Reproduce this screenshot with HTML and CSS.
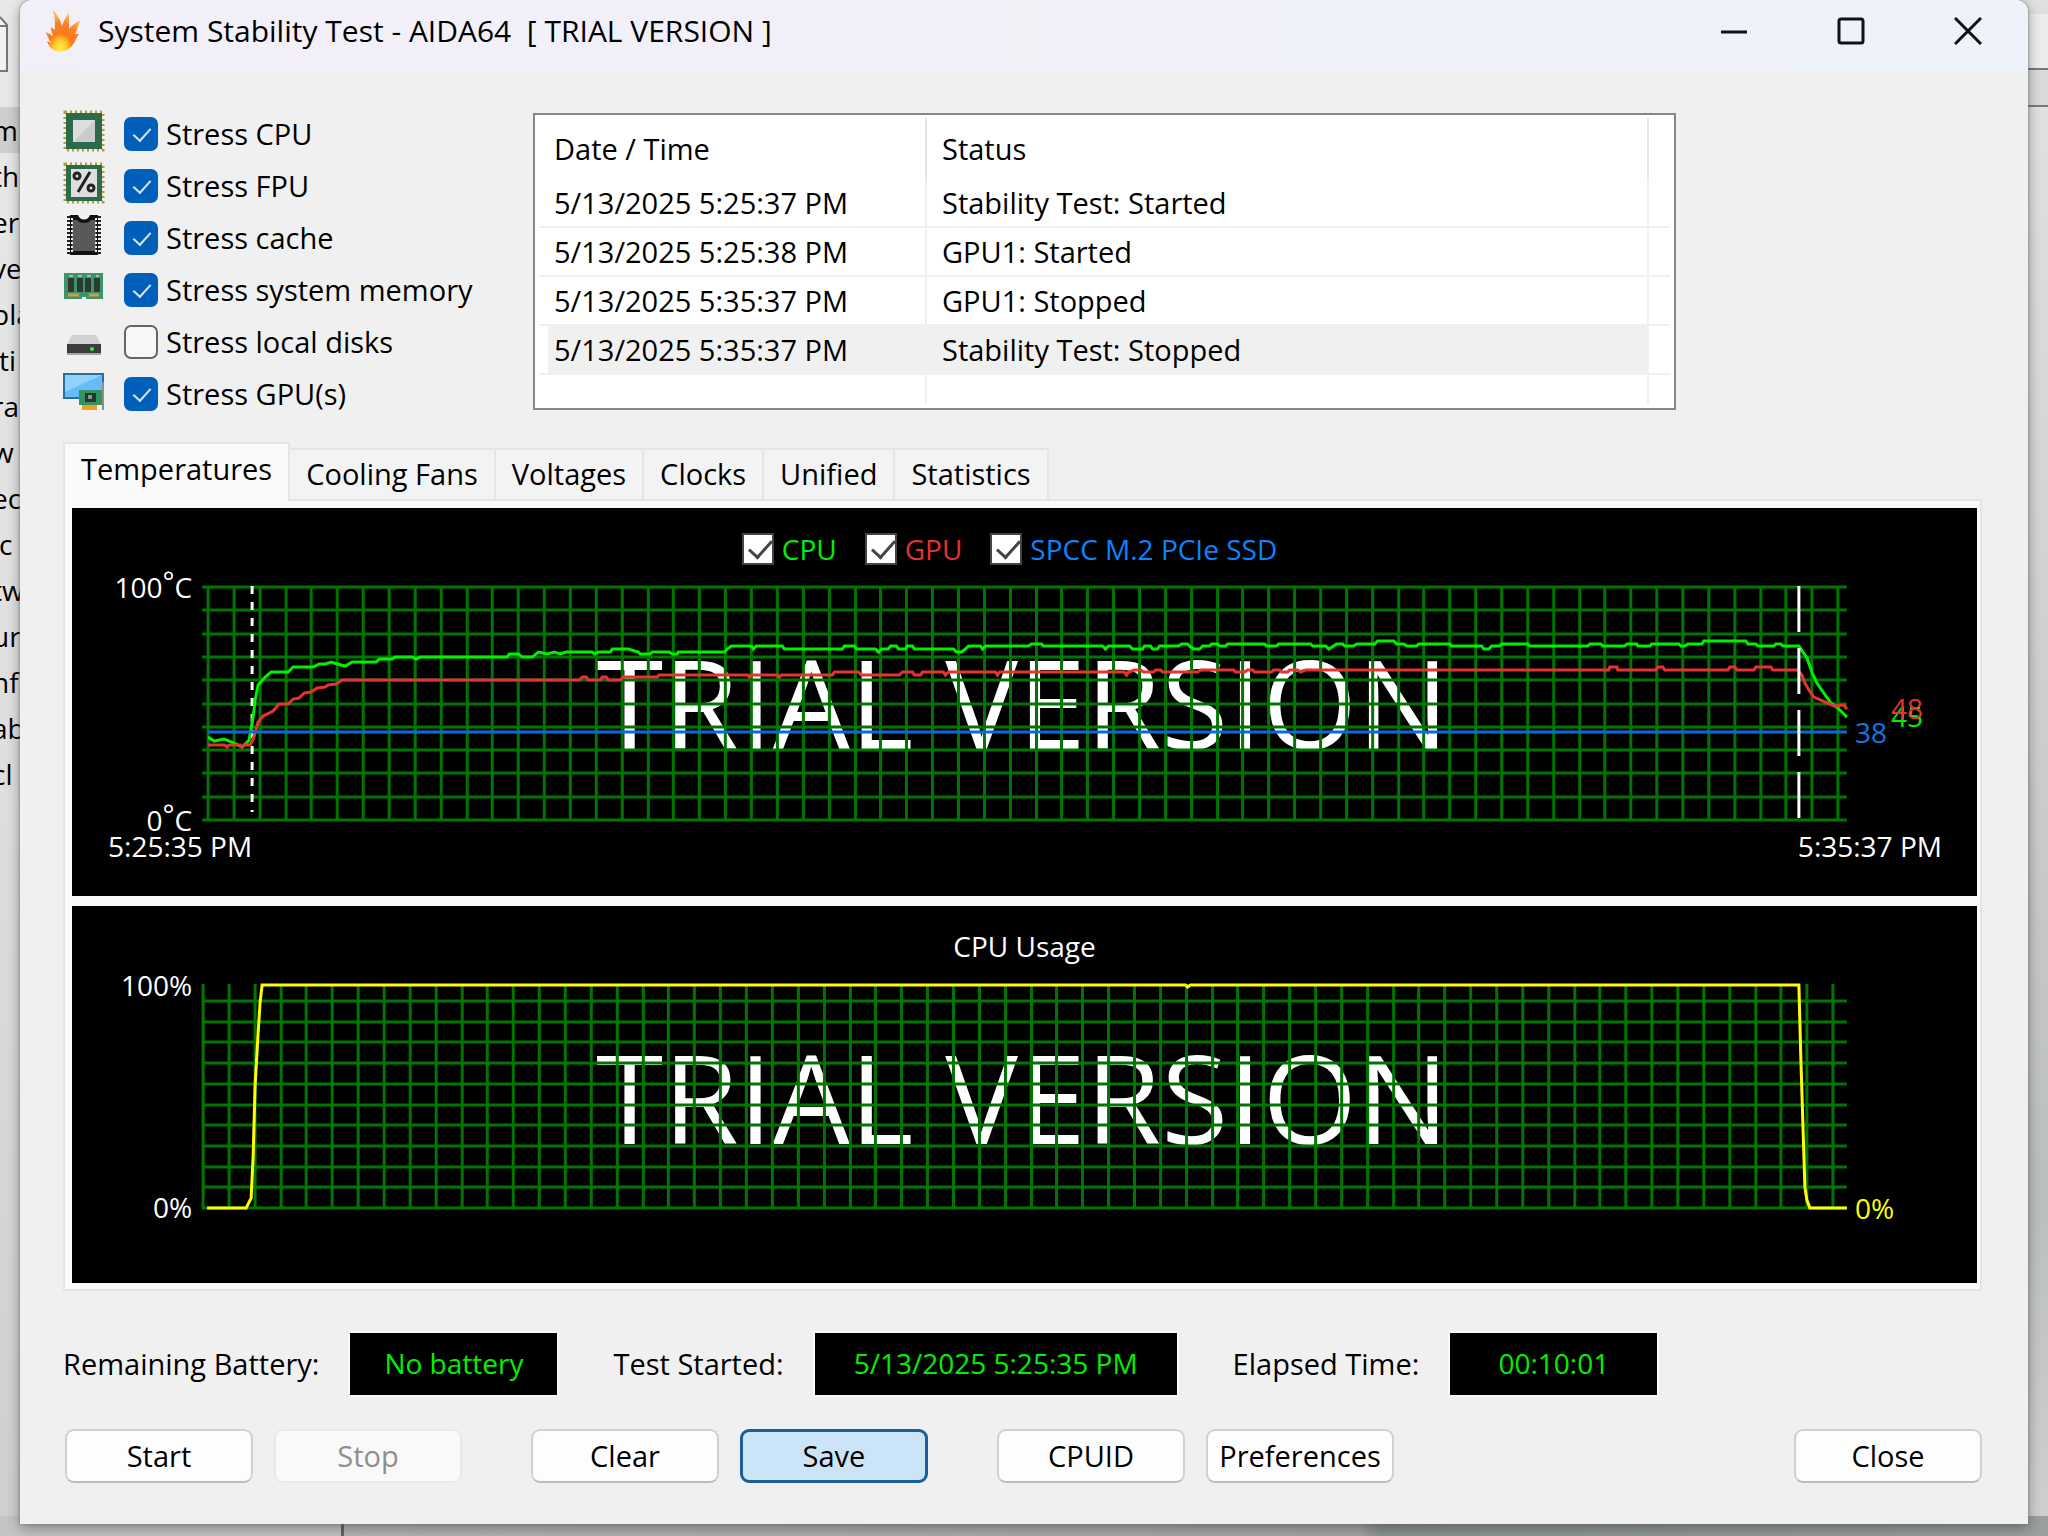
FILE: index.html
```html
<!DOCTYPE html>
<html lang="en">
<head>
    <meta charset="UTF-8">
    <meta name="viewport" content="width=device-width, initial-scale=1.0">
    <title>System Stability Test</title>
    <link rel="stylesheet" href="styles.css">
</head>
<body>

<!-- window behind -->
<div class="backdrop">
    <div class="back-left">
        <div class="back-toolbar">
            <svg width="8" height="56" viewBox="0 0 8 56"><path d="M0 1 L7 9 V55 H0" fill="#f2f2f2" stroke="#777" stroke-width="2"/><path d="M0 10 H7" stroke="#777" stroke-width="2"/></svg>
        </div>
        <ul class="back-menu">
            <li class="selected">mp</li>
            <li>th</li>
            <li>era</li>
            <li>ve</li>
            <li>pla</li>
            <li>lti</li>
            <li>ra</li>
            <li>w</li>
            <li>ect</li>
            <li>ic</li>
            <li>tw</li>
            <li>ur</li>
            <li>nfi</li>
            <li>ab</li>
            <li>cl</li>
        </ul>
    </div>
    <div class="back-right">
        <div class="back-strip"></div>
        <div class="back-head"></div>
    </div>
    <div class="back-bottom"></div>
</div>

<div class="window">
    <header class="titlebar">
        <svg class="flame" viewBox="0 0 34 42">
            <defs>
                <radialGradient id="fire" cx="0.42" cy="0.92" r="0.8">
                    <stop offset="0" stop-color="#fff34a"/>
                    <stop offset="0.25" stop-color="#ffc62a"/>
                    <stop offset="0.45" stop-color="#fb7a1c"/>
                    <stop offset="0.75" stop-color="#f9802b"/>
                    <stop offset="1" stop-color="#fdb64c"/>
                </radialGradient>
            </defs>
            <path fill="url(#fire)" d="M7 0 C11 4 14 9 16 16 C18 10 20 7 23 3 C23 8 23 12 23 19 C26 15 30 12 34 11 C32 17 31 20 29 24 L33 24 C30 28 29 33 25 37 C21 41 14 43 8 40 C4 38 2 34 1 31 L5 33 C3 29 1 26 0 22 L7 26 C6 22 5 20 5 17 L9 20 C9 12 9 6 7 0 Z"/>
        </svg>
        <h1>System Stability Test - AIDA64&nbsp; [ TRIAL VERSION ]</h1>
        <div class="window-buttons">
            <button type="button" aria-label="Minimize"><svg viewBox="0 0 28 28"><path d="M1 15 H27"/></svg></button>
            <button type="button" aria-label="Maximize"><svg viewBox="0 0 28 28"><rect x="2" y="2" width="24" height="24" rx="2"/></svg></button>
            <button type="button" aria-label="Close window"><svg viewBox="0 0 28 28"><path d="M1 1 L27 27 M27 1 L1 27"/></svg></button>
        </div>
    </header>

    <main>
        <div class="top">
            <ul class="options">
                <li>
                    <svg viewBox="0 0 42 42">
                        <rect x="2" y="2" width="38" height="38" fill="none" stroke="#b59a45" stroke-width="3" stroke-dasharray="2 3"/>
                        <rect x="3" y="3" width="36" height="36" fill="#2d6a4a"/>
                        <rect x="10" y="10" width="22" height="22" fill="#dedede"/>
                        <path d="M10 32 L32 10 V32 Z" fill="#cbcbcb"/>
                    </svg>
                    <label><input type="checkbox" checked>Stress CPU</label>
                </li>
                <li>
                    <svg viewBox="0 0 42 42">
                        <rect x="2" y="2" width="38" height="38" fill="none" stroke="#b59a45" stroke-width="3" stroke-dasharray="2 3"/>
                        <rect x="3" y="3" width="36" height="36" fill="#2d6a4a"/>
                        <rect x="8" y="7" width="26" height="28" fill="#dedede"/>
                        <circle cx="14" cy="14" r="3" fill="none" stroke="#222" stroke-width="3"/>
                        <circle cx="28" cy="26" r="3" fill="none" stroke="#222" stroke-width="3"/>
                        <path d="M27 10 L15 30" stroke="#222" stroke-width="3"/>
                    </svg>
                    <label><input type="checkbox" checked>Stress FPU</label>
                </li>
                <li>
                    <svg viewBox="0 0 42 42">
                        <path d="M6 2 V40 M36 2 V40" stroke="#222" stroke-width="4" stroke-dasharray="2 2"/>
                        <path d="M7 1 H15 C17 7 25 7 27 1 H35 V41 H7 Z" fill="#111"/>
                        <path d="M9 6 H14 C17 10 25 10 28 6 H33 V37 H9 Z" fill="#595959"/>
                        <path d="M9 4 V38 M33 4 V38" stroke="#eee" stroke-width="2" stroke-dasharray="2 2"/>
                    </svg>
                    <label><input type="checkbox" checked>Stress cache</label>
                </li>
                <li>
                    <svg viewBox="0 0 42 42">
                        <path d="M1 7 H40 V33 H23 V31 H19 V33 H1 Z" fill="#3b946a"/>
                        <path d="M5 12 h6 v14 h-6z M14 12 h6 v14 h-6z M22 12 h6 v14 h-6z M31 12 h6 v14 h-6z" fill="#2c3a33"/>
                        <path d="M5 29 H16 M26 29 H36" stroke="#d39b46" stroke-width="3"/>
                        <path d="M6 10 H36" stroke="#8cc7a6" stroke-width="2" stroke-dasharray="4 5"/>
                    </svg>
                    <label><input type="checkbox" checked>Stress system memory</label>
                </li>
                <li>
                    <svg viewBox="0 0 42 42">
                        <path d="M9 17 H33 L38 27 H4 Z" fill="#cfd1d2"/>
                        <rect x="4" y="26" width="34" height="10" fill="#3b3c3d"/>
                        <path d="M4 36 H38" stroke="#a5a5a5" stroke-width="2"/>
                        <circle cx="29" cy="31" r="2" fill="#35f035"/>
                    </svg>
                    <label><input type="checkbox">Stress local disks</label>
                </li>
                <li>
                    <svg viewBox="0 0 42 42">
                        <rect x="1" y="4" width="39" height="24" fill="#66bdf5" stroke="#2d6e9e" stroke-width="2"/>
                        <path d="M2 5 H39 L2 22 Z" fill="#8fd3fb"/>
                        <rect x="16" y="20" width="24" height="15" fill="#389163"/>
                        <rect x="22" y="23" width="11" height="9" fill="#23382d"/>
                        <rect x="25" y="25" width="4" height="4" fill="#8a938e"/>
                        <rect x="19" y="35" width="15" height="5" fill="#eea023"/>
                        <path d="M40 12 V40" stroke="#8a8f91" stroke-width="2"/>
                    </svg>
                    <label><input type="checkbox" checked>Stress GPU(s)</label>
                </li>
            </ul>

            <div class="log">
                <table>
                    <thead>
                        <tr><th class="col-date">Date / Time</th><th>Status</th><th class="col-end"></th></tr>
                    </thead>
                    <tbody>
                        <tr><td>5/13/2025 5:25:37 PM</td><td>Stability Test: Started</td><td></td></tr>
                        <tr><td>5/13/2025 5:25:38 PM</td><td>GPU1: Started</td><td></td></tr>
                        <tr><td>5/13/2025 5:35:37 PM</td><td>GPU1: Stopped</td><td></td></tr>
                        <tr class="current"><td>5/13/2025 5:35:37 PM</td><td>Stability Test: Stopped</td><td></td></tr>
                        <tr class="empty"><td></td><td></td><td></td></tr>
                    </tbody>
                </table>
            </div>
        </div>

        <div class="tabs" role="tablist">
            <button type="button" role="tab" class="active">Temperatures</button>
            <button type="button" role="tab">Cooling Fans</button>
            <button type="button" role="tab">Voltages</button>
            <button type="button" role="tab">Clocks</button>
            <button type="button" role="tab">Unified</button>
            <button type="button" role="tab">Statistics</button>
        </div>

        <div class="panel">
            <section class="chart">
                <div class="legend">
                    <label class="cpu"><input type="checkbox" checked>CPU</label>
                    <label class="gpu"><input type="checkbox" checked>GPU</label>
                    <label class="ssd"><input type="checkbox" checked>SPCC M.2 PCIe SSD</label>
                </div>
                <svg viewBox="72 580 1904 316">
                    <text class="trial" x="1022" y="749">TRIAL VERSION</text>
                    <g class="grid" id="temp-grid"></g>
                    <path class="marker" stroke-dasharray="8 8" d="M252 586 V812"/>
                    <path class="line green" d="M208 737 L214 741 224 739 234 743 242 747 249 740 253 717 255 700 258 685 265 677 271 672 288 672 293 667 313 667 319 664 325 664 331 662 337 664 345 666 352 662 376 662 379 659 392 659 395 657 412 657 416 659 420 657 507 657 509 654 518 654 522 657 532 657 538 652 547 654 554 652 560 654 566 652 592 652 594 654 598 652 610 652 612 649 628 649 638 652 640 654 650 654 652 652 669 652 672 654 677 654 678 652 724 652 727 649 731 646 751 646 753 649 756 646 782 646 784 649 842 649 844 646 854 646 856 649 875 649 878 652 881 649 888 649 890 646 896 646 898 649 905 649 907 646 912 646 914 649 953 649 956 652 961 652 965 649 968 646 980 646 982 649 985 646 1028 646 1031 644 1041 644 1043 646 1102 646 1105 649 1108 646 1129 646 1132 649 1142 649 1144 646 1150 646 1152 649 1157 649 1159 646 1178 646 1181 644 1187 644 1189 646 1193 649 1199 649 1202 646 1209 646 1211 644 1217 644 1219 646 1225 646 1227 644 1264 644 1266 646 1276 646 1278 644 1310 644 1312 646 1325 646 1328 649 1333 646 1336 644 1342 644 1344 646 1353 646 1356 644 1374 644 1377 641 1393 641 1396 644 1403 644 1406 646 1416 646 1418 644 1449 644 1451 646 1481 646 1483 649 1488 649 1491 646 1499 646 1501 644 1527 644 1529 646 1587 646 1589 644 1600 644 1602 646 1624 646 1626 644 1636 644 1637 646 1649 646 1651 644 1678 644 1680 646 1684 646 1687 644 1701 644 1703 641 1745 641 1747 644 1755 644 1757 646 1773 646 1775 644 1780 644 1782 646 1798 646 1806 658 1811 672 1816 683 1823 693 1830 703 1837 708 1846 717"/>
                    <path class="line red" d="M208 745 L225 745 227 747 229 745 240 745 242 747 244 745 250 745 253 739 255 733 258 722 263 716 273 711 279 704 288 704 293 699 299 698 304 693 311 692 317 688 325 687 328 685 336 684 342 680 579 680 582 677 586 677 588 680 600 680 602 677 606 677 608 680 620 680 623 677 657 677 659 675 748 675 749 677 752 675 777 675 779 677 781 675 832 675 834 672 858 672 861 675 899 675 902 672 912 672 914 675 920 675 922 672 943 672 945 675 948 672 995 672 997 675 999 672 1124 672 1126 675 1128 672 1134 670 1140 670 1143 672 1153 672 1155 670 1160 670 1162 672 1197 672 1200 670 1233 670 1235 672 1244 672 1247 670 1252 670 1254 672 1271 672 1273 670 1279 670 1281 672 1287 672 1289 670 1297 670 1300 672 1305 670 1608 670 1609 667 1616 667 1617 670 1655 670 1657 667 1662 667 1664 670 1727 670 1729 667 1734 667 1736 670 1753 670 1755 667 1770 667 1772 670 1797 670 1801 675 1804 683 1808 690 1813 697 1820 700 1829 704 1834 706 1843 705 1846 709"/>
                    <path class="line blue" d="M208 732 H1846"/>
                    <path class="marker" stroke-dasharray="46 16" d="M1798 586 V819"/>
                    <text class="end" x="192" y="598">100<tspan dy="-6">°</tspan><tspan dy="6">C</tspan></text>
                    <text class="end" x="192" y="831">0<tspan dy="-6">°</tspan><tspan dy="6">C</tspan></text>
                    <text x="108" y="857">5:25:35 PM</text>
                    <text x="1797" y="857">5:35:37 PM</text>
                    <text class="blue-text" x="1854" y="743">38</text>
                    <text class="green-text" x="1890" y="727">45</text>
                    <text class="red-text" x="1890" y="719">48</text>
                </svg>
            </section>

            <section class="chart">
                <h2>CPU Usage</h2>
                <svg viewBox="72 970 1904 313">
                    <text class="trial" x="1022" y="1144">TRIAL VERSION</text>
                    <g class="grid" id="usage-grid"></g>
                    <path class="line yellow" d="M207 1208 H246 L249 1202 251 1198 253 1157 255 1085 258 1033 260 1002 262 985 1185 985 1187 987 1190 985 1798 985 1800 1060 1804 1187 1806 1200 1809 1208 1846 1208"/>
                    <text class="end" x="192" y="996">100%</text>
                    <text class="end" x="192" y="1218">0%</text>
                    <text class="yellow-text" x="1854" y="1219">0%</text>
                </svg>
            </section>
        </div>

        <div class="readouts">
            <span class="name">Remaining Battery:</span>
            <output class="value">No battery</output>
            <span class="name">Test Started:</span>
            <output class="value wide">5/13/2025 5:25:35 PM</output>
            <span class="name">Elapsed Time:</span>
            <output class="value">00:10:01</output>
        </div>

        <div class="actions">
            <div class="group">
                <button type="button">Start</button>
                <button type="button" disabled>Stop</button>
            </div>
            <div class="group">
                <button type="button">Clear</button>
                <button type="button" class="default">Save</button>
            </div>
            <div class="group">
                <button type="button">CPUID</button>
                <button type="button">Preferences</button>
            </div>
            <button type="button" class="close">Close</button>
        </div>
    </main>
</div>

<script>
    function drawGrid(id, left, right, firstX, top, bottom, firstY, rows) {
        let d = '';
        for (let i = 0; i < 64; i++) {
            const x = Math.round(firstX + i * 25.86);
            d += `M${x} ${top} V${bottom}`;
        }
        const step = (bottom - firstY) / rows;
        for (let i = 0; i <= rows; i++) {
            const y = Math.round(firstY + i * step);
            d += `M${left} ${y} H${right}`;
        }
        document.getElementById(id).innerHTML = `<path d="${d}"/>`;
    }

    drawGrid('temp-grid', 202, 1846, 208, 587, 820, 587, 10);
    drawGrid('usage-grid', 202, 1846, 203, 984, 1208, 1001, 10);
</script>

</body>
</html>
```

FILE: styles.css
```css
* {
    box-sizing: border-box;
}

body {
    margin: 0;
    min-height: 100vh;
    font-family: 'Open Sans', 'Noto Sans', sans-serif;
    font-size: 28px;
    line-height: 36px;
    color: #000;
    background: #c9c9c9;
}

ul {
    list-style: none;
    margin: 0;
    padding: 0;
}

button {
    font: inherit;
    color: inherit;
    padding: 0;
}

/* window behind */
.backdrop {
    position: absolute;
    inset: 0;
    overflow: hidden;
}

.back-left {
    position: absolute;
    top: 0;
    bottom: 0;
    left: 0;
    width: 30px;
    overflow: hidden;
    background: linear-gradient(#e9e9e9 0, #dedede 800px, #cfcfcf 100%);
}

.back-toolbar {
    height: 107px;
    padding-top: 16px;
}

.back-menu li {
    height: 46px;
    line-height: 46px;
    text-indent: -8px;
    white-space: nowrap;
}

.back-menu .selected {
    background: #cfcfcf;
}

.back-right {
    position: absolute;
    top: 0;
    bottom: 0;
    right: 0;
    width: 30px;
    background: linear-gradient(#e4e4e4 0, #cfcfcf 700px, #bcbfc0 1200px, #d0d0d0 100%);
}

.back-strip {
    height: 70px;
    border-top: 14px solid #e0e0e0;
    border-bottom: 2px solid #777;
    background: #ececec;
}

.back-head {
    height: 37px;
    border-bottom: 2px solid #777b80;
    background: #dadada;
}

.back-bottom {
    position: absolute;
    left: 0;
    right: 0;
    bottom: 0;
    height: 20px;
    background: linear-gradient(to right, #c4c4c4 341px, #666 341px, #666 344px, #b4b4b4 344px, #a5a5a5 1360px, #8b9292 1380px, #9a9f9f 100%);
}

.window {
    position: relative;
    margin: 0 20px;
    border-radius: 12px 12px 0 0;
    background: #f0f0f0;
    box-shadow: 0 0 3px #777, 0 4px 14px rgba(0, 0, 0, 0.35);
    overflow: hidden;
}

.titlebar {
    display: flex;
    align-items: center;
    height: 71px;
    padding: 0 2px 9px 26px;
    background: linear-gradient(to right, #f3eff8, #f1f1f8 50%, #edf2fb);
}

.flame {
    width: 34px;
    height: 42px;
}

.titlebar h1 {
    flex: 1;
    margin: 0 0 0 18px;
    font-size: 30px;
    font-weight: normal;
}

.window-buttons {
    display: flex;
}

.window-buttons button {
    display: flex;
    align-items: center;
    justify-content: center;
    width: 117px;
    height: 60px;
    border: 0;
    background: none;
}

.window-buttons svg {
    width: 28px;
    height: 28px;
    fill: none;
    stroke: #111;
    stroke-width: 3;
}

main {
    padding: 37px 46px 41px 43px;
}

.top {
    display: grid;
    grid-template-columns: 470px minmax(0, 1143px);
    font-size: 29px;
}

.options li {
    display: flex;
    align-items: center;
    height: 52px;
}

.options li > svg {
    width: 42px;
    height: 42px;
    margin: 0 19px 6px 0;
}

.options label,
.legend label {
    display: flex;
    align-items: center;
}

input[type="checkbox"] {
    appearance: none;
    position: relative;
    margin: 0 8px 0 0;
    width: 34px;
    height: 34px;
    border: 2px solid #666;
    border-radius: 7px;
    background: #f7f7f7;
}

input[type="checkbox"]:checked {
    border-color: #005fb8;
    background: #005fb8;
}

input[type="checkbox"]:checked::after {
    content: "";
    position: absolute;
    left: 11px;
    top: 5px;
    width: 8px;
    height: 15px;
    border: solid #d5e6f5;
    border-width: 0 2px 2px 0;
    transform: rotate(42deg);
}

.log {
    height: 297px;
    margin-top: 5px;
    padding: 3px 4px;
    border: 2px solid #828790;
    background: #fff;
    overflow: hidden;
}

.log table {
    width: 100%;
    border-collapse: separate;
    border-spacing: 0;
    table-layout: fixed;
    text-align: left;
}

.log th {
    height: 61px;
    padding: 0 0 0 15px;
    border-right: 2px solid #e5e5e5;
    font-weight: normal;
}

.log .col-date {
    width: 388px;
}

.log .col-end {
    width: 21px;
}

.log td {
    height: 49px;
    padding: 0 0 0 15px;
    border-right: 2px solid #f0f0f0;
    border-bottom: 2px solid #f0f0f0;
}

.log th:last-child,
.log td:last-child {
    padding: 0;
    border-right: 0;
}

.log .current td {
    background: #f0f0f0;
}

.log .current td:first-child {
    background: linear-gradient(to right, #fff 9px, #f0f0f0 9px);
}

.log .current td:last-child {
    background: #fff;
}

.log .empty td {
    height: 29px;
    border-bottom: 0;
}

.tabs {
    display: flex;
    align-items: flex-end;
    margin-top: 22px;
    font-size: 29px;
}

.tabs button {
    height: 51px;
    padding: 0 16px 2px;
    border: 2px solid #e5e5e5;
    border-left: 0;
    border-bottom: 0;
    background: #f3f3f3;
}

.tabs .active {
    position: relative;
    height: 59px;
    margin-bottom: -2px;
    padding-bottom: 8px;
    border-left: 2px solid #e5e5e5;
    background: #fafafa;
}

.panel {
    display: flex;
    flex-direction: column;
    gap: 10px;
    padding: 7px 3px 6px 7px;
    border: 2px solid #e5e5e5;
    background: #fafafa;
}

.chart {
    background: #000;
    color: #fff;
}

.chart svg {
    display: block;
    width: 100%;
    overflow: visible;
}

.chart h2 {
    height: 64px;
    margin: 0;
    padding-top: 22px;
    font-size: 28px;
    font-weight: normal;
    text-align: center;
}

.legend {
    display: flex;
    justify-content: center;
    gap: 28px;
    height: 72px;
    padding: 10px 30px 0 0;
}

.legend input[type="checkbox"],
.legend input[type="checkbox"]:checked {
    width: 32px;
    height: 32px;
    border: 2px solid #444;
    border-radius: 0;
    background: #fff;
}

.legend input[type="checkbox"]:checked::after {
    left: 10px;
    top: 0;
    width: 10px;
    height: 20px;
    border-color: #444;
    border-width: 0 3px 3px 0;
}

.cpu { color: #00f000; }
.gpu { color: #e63232; }
.ssd { color: #0a84ff; }

.chart text {
    fill: #fff;
    font-size: 28px;
}

.chart .trial {
    font-size: 122px;
    text-anchor: middle;
}

.chart .end { text-anchor: end; }
.chart .green-text { fill: #00f000; }
.chart .red-text { fill: #e63232; }
.chart .blue-text { fill: #0a7ae6; }
.chart .yellow-text { fill: #ffff00; }

.grid path {
    fill: none;
    stroke: #007600;
    stroke-width: 3;
}

.line,
.marker {
    fill: none;
    stroke-width: 3;
}

.marker { stroke: #fff; }
.green { stroke: #00f000; }
.red { stroke: #e63232; }
.blue { stroke: #0a6ad8; }
.yellow { stroke: #ffff00; }

.readouts {
    display: flex;
    align-items: center;
    margin-top: 42px;
}

.readouts .name {
    margin-right: 31px;
    font-size: 29px;
}

.readouts .value {
    width: 207px;
    height: 62px;
    margin-right: 56px;
    background: #000;
    color: #00f000;
    line-height: 60px;
    text-align: center;
    outline: 2px solid #fafafa;
}

.readouts .wide {
    width: 362px;
}

.actions {
    display: flex;
    gap: 69px;
    margin: 34px 0 0 2px;
}

.actions .group {
    display: flex;
    gap: 21px;
}

.actions button {
    width: 188px;
    height: 54px;
    border: 2px solid #d0d0d0;
    border-bottom-color: #bdbdbd;
    border-radius: 9px;
    background: #fdfdfd;
    font-size: 29px;
}

.actions button:disabled {
    border-color: #e9e9e9;
    background: #f9f9f9;
    color: #8f8f8f;
}

.actions .default {
    border: 3px solid #1a5f9c;
    background: #cce4f7;
}

.actions .close {
    margin-left: auto;
}
```
